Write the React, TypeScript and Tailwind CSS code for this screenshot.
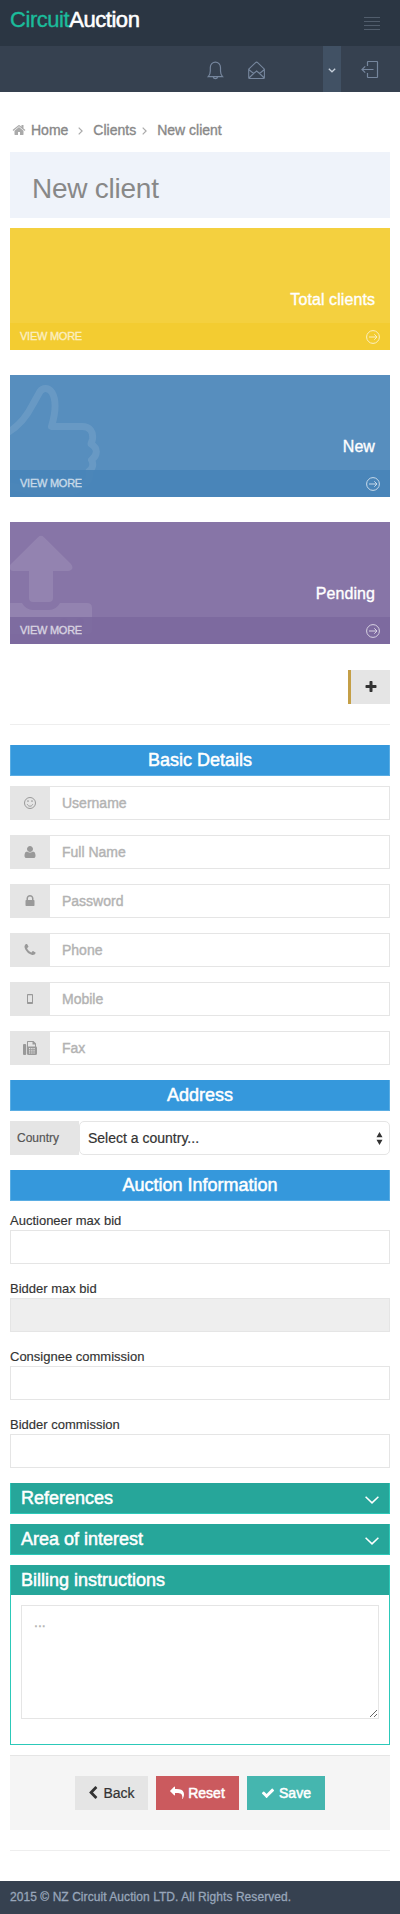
import React from "react";

const HEAVY = "[-webkit-text-stroke:0.35px_currentColor]";

function Fa({ d, size, className = "" }: { d: string; size: number; className?: string }) {
  return (
    <svg viewBox="0 0 1792 1792" width={size} height={size} fill="currentColor" className={`shrink-0 ${className}`}>
      <path d={d} />
    </svg>
  );
}

const P = {
  home: "M1472 992v480q0 26-19 45t-45 19h-384v-384h-256v384h-384q-26 0-45-19t-19-45v-480q0-1 .5-3t.5-3l575-474 575 474q1 2 1 6zm223-69l-62 74q-8 9-21 11h-3q-13 0-21-7l-692-577-692 577q-12 8-24 7-13-2-21-11l-62-74q-8-10-7-23.5t11-21.5l719-599q32-26 76-26t76 26l244 204v-195q0-14 9-23t23-9h192q14 0 23 9t9 23v408l219 182q10 8 11 21.5t-7 23.5z",
  plus: "M1600 736v192q0 40-28 68t-68 28h-416v416q0 40-28 68t-68 28h-192q-40 0-68-28t-28-68v-416h-416q-40 0-68-28t-28-68v-192q0-40 28-68t68-28h416v-416q0-40 28-68t68-28h192q40 0 68 28t28 68v416h416q40 0 68 28t28 68z",
  lock: "M640 768h512v-192q0-106-75-181t-181-75-181 75-75 181v192zm832 96v576q0 40-28 68t-68 28h-960q-40 0-68-28t-28-68v-576q0-40 28-68t68-28h32v-192q0-184 132-316t316-132 316 132 132 316v192h32q40 0 68 28t28 68z",
  user: "M1600 1405q0 120-73 189.5t-194 69.5h-874q-121 0-194-69.5t-73-189.5q0-53 3.5-103.5t14-109 26.5-108.5 43-97.5 62-81 85.5-53.5 111.5-20q9 0 42 21.5t74.5 48 108 48 133.5 21.5 133.5-21.5 108-48 74.5-48 42-21.5q61 0 111.5 20t85.5 53.5 62 81 43 97.5 26.5 108.5 14 109 3.5 103.5zm-320-893q0 159-112.5 271.5t-271.5 112.5-271.5-112.5-112.5-271.5 112.5-271.5 271.5-112.5 271.5 112.5 112.5 271.5z",
  phone: "M1600 1240q0 27-10 70.5t-21 68.5q-21 50-122 106-94 51-186 51-27 0-52.5-3.5t-57.5-12.5-47.5-14.5-55.5-20.5-49-18q-98-35-175-83-128-79-264.5-215.5t-215.5-264.5q-48-77-83-175-3-9-18-49t-20.5-55.5-14.5-47.5-12.5-57.5-3.5-52.5q0-92 51-186 56-101 106-122 25-11 68.5-21t70.5-10q14 0 21 3 18 6 53 76 11 19 30 54t35 63.5 31 53.5q3 4 17.5 25t21.5 35.5 7 28.5q0 20-28.5 50t-62 55-62 53-28.5 46q0 9 5 22.5t8.5 20.5 14 24 11.5 19q76 137 174 235t235 174q2 1 19 11.5t24 14 20.5 8.5 22.5 5q18 0 46-28.5t53-62 55-62 50-28.5q14 0 28.5 7t35.5 21.5 25 17.5q25 15 53.5 31t63.5 35 54 30q70 35 76 53 3 7 3 21z",
  share: "M1792 640q0 26-19 45l-512 512q-19 19-45 19t-45-19-19-45v-256h-224q-98 0-175.5 6t-154 21.5-133 42.5-105.5 69.5-80 101-48.5 138.5-17.5 181q0 55 5 123 0 6 2.5 23.5t2.5 26.5q0 15-8.5 25t-23.5 10q-16 0-28-17-7-9-13-22t-13.5-30-10.5-24q-127-285-127-451 0-199 53-333 162-403 875-403h224v-256q0-26 19-45t45-19 45 19l512 512q19 19 19 45z",
  check: "M1671 566q0 40-28 68l-724 724-136 136q-28 28-68 28t-68-28l-136-136-362-362q-28-28-28-68t28-68l136-136q28-28 68-28t68 28l294 295 656-657q28-28 68-28t68 28l136 136q28 28 28 68z",
  left: "M1427 301l-531 531 531 531q19 19 19 45t-19 45l-166 166q-19 19-45 19t-45-19l-742-742q-19-19-19-45t19-45l742-742q19-19 45-19t45 19l166 166q19 19 19 45t-19 45z",
};

function TopBars() {
  return (
    <header>
      <div className="flex h-[46px] justify-between bg-[#2b3643] pl-[10px] pr-5">
        <div className="pt-[7px] text-[22px] leading-[26px] tracking-[-0.450px] text-white">
          <span className={`text-[#1bbc9b] ${HEAVY}`}>Circuit</span>
          <span className="[-webkit-text-stroke:0.550px_currentColor]">Auction</span>
        </div>
        <div className="mt-[17px] flex w-4 flex-col gap-[3px]">
          <i className="h-px bg-[#515d6c]" />
          <i className="h-px bg-[#515d6c]" />
          <i className="h-px bg-[#515d6c]" />
          <i className="h-px bg-[#515d6c]" />
        </div>
      </div>
      <div className="flex h-[46px] bg-[#364150] text-[#76869d]">
        <svg className="ml-[207px] mt-[15px]" width="17" height="19" viewBox="0 0 17 19" fill="none" stroke="currentColor" strokeWidth="1.2">
          <path d="M1.3 15.6h14.2c-1.3-1.3-2-3-2-5.600V6.500c0-3-2.300-5.400-5.100-5.400S3.300 3.500 3.300 6.500V10c0 2.600-.700 4.300-2 5.600zM6.200 15.800c.200 1.200 1 1.900 2.200 1.900s2-.700 2.200-1.900" />
        </svg>
        <svg className="ml-[23px] mt-[15px]" width="19" height="19" viewBox="0 0 19 19" fill="none" stroke="currentColor" strokeWidth="1.100">
          <path d="M1.700 8.200 8.300 1.800q1.300-1.200 2.600 0l6.500 6.400v8.500q0 .8-.8.8H2.500q-.8 0-.8-.8zM1.700 8.500l4.900 4 3-2.500 3 2.500 4.800-4M2 17l4.600-4.500M17.200 17l-4.600-4.500" />
        </svg>
        <div className="ml-[57px] flex w-[18px] items-center justify-center bg-[#415164] text-[#c6cfda]">
          <svg width="8" height="5" viewBox="0 0 8 5" fill="none" stroke="currentColor" strokeWidth="1.300" className="mt-[2px]">
            <path d="m.8.8 3.200 3L7.200.8" />
          </svg>
        </div>
        <svg className="ml-[20px] mt-[14px]" width="18" height="19" viewBox="0 0 18 19" fill="none" stroke="currentColor" strokeWidth="1.200">
          <path d="M6.500 6V2q0-.500.500-.500h9q.500 0 .500.500v15q0 .500-.500.500H7q-.500 0-.500-.500v-4M12.500 9.500H1M4.200 6.400 1 9.500l3.200 3.100" />
        </svg>
      </div>
    </header>
  );
}

function Angle({ className }: { className: string }) {
  return (
    <svg width="5" height="8" viewBox="0 0 5 8" fill="none" stroke="#aaa" strokeWidth="1.200" className={className}>
      <path d="m.700.600 3.400 3.400L.700 7.400" />
    </svg>
  );
}

function Breadcrumb() {
  return (
    <nav className={`flex h-[60px] items-center pl-[2px] pt-4 text-sm text-[#888] ${HEAVY}`}>
      <Fa d={P.home} size={14} className="text-[#aaa]" />
      <span className="ml-[5px]">Home</span>
      <Angle className="ml-[9.500px] mt-[1px]" />
      <span className="ml-[10.500px]">Clients</span>
      <Angle className="ml-[6px] mt-[1px]" />
      <span className="ml-[10px]">New client</span>
    </nav>
  );
}

function Stat({ label, bg, bar, children }: { label: string; bg: string; bar: string; children?: React.ReactNode }) {
  return (
    <section className={`relative flex h-[122px] flex-col overflow-hidden text-white ${bg}`}>
      {children}
      <div className={`relative h-[95px] pr-[15px] pt-[62px] text-right text-base leading-[19px] tracking-[0.080px] ${HEAVY}`}>{label}</div>
      <div className={`relative flex h-[27px] items-center justify-between px-[10px] ${bar}`}>
        <span className="text-[11px] tracking-[-0.250px] opacity-70 [-webkit-text-stroke:0.300px_currentColor]">VIEW MORE</span>
        <svg width="14" height="14" viewBox="0 0 14 14" fill="none" stroke="currentColor" strokeWidth="1" className="mt-[1px] opacity-70">
          <circle cx="7" cy="7" r="6.400" />
          <path d="M3 7h8M8.300 4.300 11 7l-2.700 2.700" />
        </svg>
      </div>
    </section>
  );
}

function Bar({ children }: { children: React.ReactNode }) {
  return (
    <h4 className="h-[31px] border border-t-0 border-[#5aade3] bg-[#3598dc] text-center text-lg leading-[30px] text-white [-webkit-text-stroke:0.500px_currentColor]">{children}</h4>
  );
}

function Field({ placeholder, icon }: { placeholder: string; icon: React.ReactNode }) {
  return (
    <div className="flex h-[34px]">
      <div className="flex w-10 shrink-0 items-center justify-center bg-[#e5e5e5] text-[#999]">{icon}</div>
      <input
        placeholder={placeholder}
        className="min-w-0 grow border border-l-0 border-[#e5e5e5] px-3 text-sm placeholder:text-[#b3b3b3] placeholder:[-webkit-text-stroke:0.400px_#b3b3b3]"
      />
    </div>
  );
}

function Labeled({ label, disabled = false }: { label: string; disabled?: boolean }) {
  return (
    <label className="block h-[53px] text-[13px] leading-[20px] text-[#333]">
      <span className="block h-[19px] [-webkit-text-stroke:0.150px_currentColor]">{label}</span>
      <input disabled={disabled} className="block h-[34px] w-full border border-[#e5e5e5] disabled:bg-[#eee]" />
    </label>
  );
}

function Fold({ title }: { title: string }) {
  return (
    <div className="flex h-[31px] justify-between border border-t-0 border-[#2cc9b9] bg-[#26a69a] pl-[10px] pr-[10px] text-white">
      <h4 className="text-lg leading-[30px] [-webkit-text-stroke:0.500px_currentColor]">{title}</h4>
      <svg width="14" height="8" viewBox="0 0 14 8" fill="none" stroke="currentColor" strokeWidth="1.500" className="mt-[13px]">
        <path d="m.600.700 6.400 6.200L13.400.700" />
      </svg>
    </div>
  );
}

const smile = (
  <svg width="12" height="12" viewBox="0 0 12 12" fill="none" stroke="currentColor" strokeWidth="1">
    <circle cx="6" cy="6" r="5.500" />
    <path d="M3.300 7.300c.500 1.200 1.500 1.900 2.700 1.900s2.200-.700 2.700-1.900" />
    <circle cx="4" cy="4" r=".850" fill="currentColor" stroke="none" />
    <circle cx="8" cy="4" r=".850" fill="currentColor" stroke="none" />
  </svg>
);

const mobile = (
  <svg width="6" height="10" viewBox="0 0 6 10" fill="currentColor">
    <path fillRule="evenodd" d="M.800 0h4.400q.8 0 .8.8v8.400q0 .8-.8.8H.800Q0 10 0 9.200V.8Q0 0 .800 0zM1 1.300v6.700h4V1.300z" />
  </svg>
);

const fax = (
  <svg width="14" height="14" viewBox="0 0 14 14" fill="currentColor">
    <rect x="0" y="3" width="3.200" height="11" rx="1" />
    <path fillRule="evenodd" d="M4 .700Q4 0 4.700 0h5.800L13 2.500v2.800q1 .400 1 1.700v5.500Q14 14 12.500 14h-7Q4 14 4 12.500zM5 1v4.500h7V3.500H9.500V1zM6 7v1.300h1.300V7zm2.200 0v1.300h1.300V7zm2.200 0v1.300h1.300V7zM6 9.200v1.300h1.300V9.200zm2.200 0v1.300h1.300V9.200zm2.200 0v1.300h1.300V9.200zM6 11.400v1.200h1.300v-1.200zm2.200 0v1.200h1.300v-1.200zm2.200 0v1.200h1.300v-1.200z" />
  </svg>
);

export default function App() {
  return (
    <div className="min-h-[1914px] bg-white font-['Liberation_Sans',Arial,sans-serif] text-[#333]">
      <TopBars />
      <main className="px-[10px]">
        <Breadcrumb />
        <h1 className="h-[66px] bg-[#eff3fa] pl-[22px] pt-[21px] text-[28px] leading-8 tracking-[-0.250px] text-[#888]">New client</h1>

        <div className="mt-[10px] flex flex-col gap-[25px]">
          <Stat label="Total clients" bg="bg-[#f4d03f]" bar="bg-[#f3cc31]" />
          <Stat label="New" bg="bg-[#578ebe]" bar="bg-[#4884b8]/90">
            <svg className="absolute left-0 top-0" width="95" height="122" viewBox="0 0 95 122" fill="none" stroke="#fff" strokeOpacity="0.1" strokeWidth="7" strokeLinejoin="round">
              <path d="M-8 60C8 54 17 41 23 29L30 16.500C33 12 39 12.500 42 17.500C47 26 45.500 38 41.500 51.500H72C80 51.500 83.500 57 82.500 64C82 67 81 68 81 69C88 73 88 80 81.500 85C84 89 82.500 94 79 96C81 104 77 109 70 110C69 115 64 116.500 58 116.500H30C15 116.500 8 111-8 110" />
            </svg>
          </Stat>
          <Stat label="Pending" bg="bg-[#8775a7]" bar="bg-[#7c699f]/90">
            <svg className="absolute left-0 top-0" width="95" height="122" viewBox="0 0 95 122" fill="#fff" fillOpacity="0.1">
              <path d="M28 15.200q3-2.800 6 0L61 42q3 4 0 6-1 1-3 1H43v27q0 4-4 4H23q-4 0-4-4V49H3q-3 0-3-3v-3z" />
              <path fillRule="evenodd" d="M0 81h12q4 7 11 7h16q7 0 11-7h27q5 0 5 5v21q0 5-5 5H0zm50 19a4 4 0 1 0 8 0 4 4 0 1 0-8 0m16 0a4 4 0 1 0 8 0 4 4 0 1 0-8 0" />
            </svg>
          </Stat>
        </div>

        <div className="mt-[26px] flex justify-end">
          <button className="flex h-[34px] w-[42px] items-center justify-center border-l-[3px] border-[#c49f47] bg-[#e5e5e5]">
            <Fa d={P.plus} size={14} className="mb-px text-[#333]" />
          </button>
        </div>
        <hr className="mb-5 mt-5 border-[#eee]" />

        <Bar>Basic Details</Bar>
        <div className="mt-[10px] flex flex-col gap-[15px]">
          <Field placeholder="Username" icon={smile} />
          <Field placeholder="Full Name" icon={<Fa d={P.user} size={14} className="mb-px" />} />
          <Field placeholder="Password" icon={<Fa d={P.lock} size={14} className="mb-px" />} />
          <Field placeholder="Phone" icon={<Fa d={P.phone} size={14} className="mb-px" />} />
          <Field placeholder="Mobile" icon={mobile} />
          <Field placeholder="Fax" icon={fax} />
        </div>

        <div className="mt-[15px]">
          <Bar>Address</Bar>
        </div>
        <div className="mt-[10px] flex h-[34px]">
          <div className="w-[69px] bg-[#e5e5e5] pl-[7px] text-xs leading-[34px] text-[#555] [-webkit-text-stroke:0.200px_currentColor]">Country</div>
          <div className="flex grow items-center justify-between rounded-[5px] border border-[#e5e5e5] pl-2 pr-[6px] text-sm [-webkit-text-stroke:0.200px_currentColor]">
            <span>Select a country...</span>
            <svg width="7" height="13" viewBox="0 0 7 13" fill="#333">
              <path d="M3.500 0 6.500 5.200h-6zM3.500 13 .500 7.800h6z" />
            </svg>
          </div>
        </div>
        <div className="mt-[15px]">
          <Bar>Auction Information</Bar>
        </div>

        <div className="mt-[10px] flex flex-col gap-[15px]">
          <Labeled label="Auctioneer max bid" />
          <Labeled label="Bidder max bid" disabled />
          <Labeled label="Consignee commission" />
          <Labeled label="Bidder commission" />
        </div>

        <div className="mt-[15px] flex flex-col gap-[10px]">
          <Fold title="References" />
          <Fold title="Area of interest" />
          <section className="h-[180px] border border-t-0 border-[#2cc9b9]">
            <h4 className="h-[30px] bg-[#26a69a] pl-[10px] text-lg leading-[30px] text-white [-webkit-text-stroke:0.500px_currentColor]">Billing instructions</h4>
            <div className="px-[10px] pt-[10px]">
              <textarea
                placeholder="..."
                className="block h-[114px] w-full border border-[#e5e5e5] px-3 py-[6px] text-sm placeholder:text-[#b3b3b3] placeholder:[-webkit-text-stroke:0.300px_#b3b3b3]"
              />
            </div>
          </section>
        </div>

        <div className="mt-[10px] flex h-[75px] justify-center gap-2 border-t border-[#e5e5e5] bg-[#f5f5f5] pt-5 text-sm">
          <button className="flex h-[34px] w-[73px] items-center justify-center gap-[3px] bg-[#e5e5e5] text-[#333] [-webkit-text-stroke:0.200px_currentColor]">
            <Fa d={P.left} size={14} className="-ml-[2px] mb-px" />
            Back
          </button>
          <button className="flex h-[34px] w-[83px] items-center justify-center gap-1 bg-[#cb5a5e] text-white [-webkit-text-stroke:0.500px_currentColor]">
            <Fa d={P.share} size={14} className="mb-px -scale-x-100" />
            Reset
          </button>
          <button className="flex h-[34px] w-[78px] items-center justify-center gap-1 bg-[#45b6af] text-white [-webkit-text-stroke:0.500px_currentColor]">
            <Fa d={P.check} size={14} className="mb-px" />
            Save
          </button>
        </div>
        <hr className="mt-5 border-[#eee]" />
      </main>
      <footer className="mt-[30px] h-[33px] bg-[#364150] pl-[10px] text-xs leading-[32px] tracking-[0.060px] text-[#98a6ba] [-webkit-text-stroke:0.300px_currentColor]">
        2015 © NZ Circuit Auction LTD. All Rights Reserved.
      </footer>
    </div>
  );
}
